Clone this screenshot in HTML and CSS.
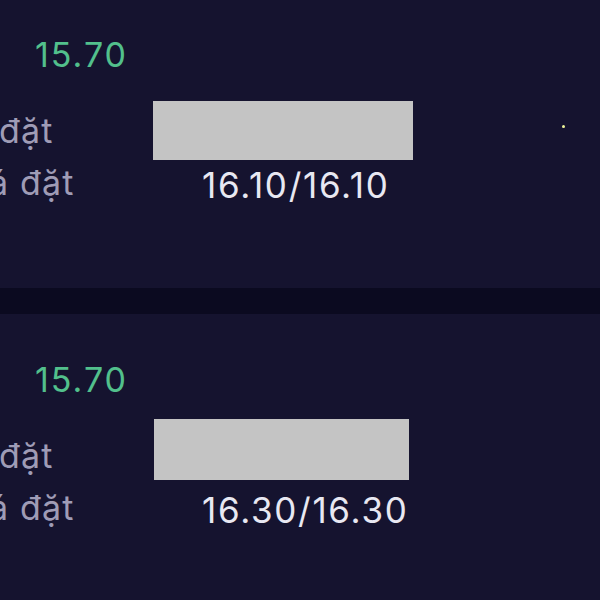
FILE: index.html
```html
<!DOCTYPE html>
<html lang="vi">
<head>
<meta charset="utf-8">
<title>Lệnh đặt</title>
<link rel="stylesheet" href="styles.css">
</head>
<body>
<div class="list">
  <section class="card card--first">
    <div class="price">15.70</div>
    <div class="grid">
      <div class="label label--row1">đặt</div>
      <div class="box box--a"></div>
      <div class="label label--row2">á đặt</div>
      <div class="value">16.10/16.10</div>
    </div>
    <span class="dot"></span>
  </section>
  <div class="sep"></div>
  <section class="card">
    <div class="price">15.70</div>
    <div class="grid">
      <div class="label label--row1">đặt</div>
      <div class="box box--b"></div>
      <div class="label label--row2">á đặt</div>
      <div class="value">16.30/16.30</div>
    </div>
  </section>
</div>
</body>
</html>
```

FILE: styles.css
```css
html, body {
  margin: 0;
  padding: 0;
  background: #15132f;
  overflow: hidden;
  width: 600px;
  height: 600px;
}
body {
  font-family: "Inter", "Noto Sans", sans-serif;
}
.list {
  display: flex;
  flex-direction: column;
  margin-top: -11px;
}
.card {
  position: relative;
  background: #15132f;
  padding-top: 46px;
  height: 299px;
  box-sizing: border-box;
}
.sep {
  height: 26px;
  background: #0b0a20;
}
.price {
  margin-left: 35px;
  font-size: 34px;
  line-height: 40px;
  letter-spacing: 2px;
  color: #52c08c;
}
.grid {
  margin-top: 26px;
  display: grid;
  grid-template-columns: 153px 1fr;
  grid-template-rows: 59px 46px;
}
.label {
  font-size: 34px;
  letter-spacing: 1.2px;
  color: #9f9cb6;
  white-space: nowrap;
}
.label--row1 {
  line-height: 59px;
  margin-left: -1px;
}
.label--row2 {
  line-height: 46px;
  margin-left: -11px;
}
.box {
  background: #c4c4c4;
  align-self: start;
}
.box--a {
  width: 260px;
  height: 59px;
}
.box--b {
  width: 255px;
  height: 61px;
  margin-top: -7px;
  margin-left: 1px;
}
.value {
  padding-left: 49px;
  padding-top: 2px;
  font-size: 35px;
  letter-spacing: 1.7px;
  line-height: 46px;
  color: #e8e8f2;
  white-space: nowrap;
}
.dot {
  position: absolute;
  left: 562px;
  top: 136px;
  width: 3px;
  height: 3px;
  border-radius: 50%;
  background: #eef59a;
}
```
